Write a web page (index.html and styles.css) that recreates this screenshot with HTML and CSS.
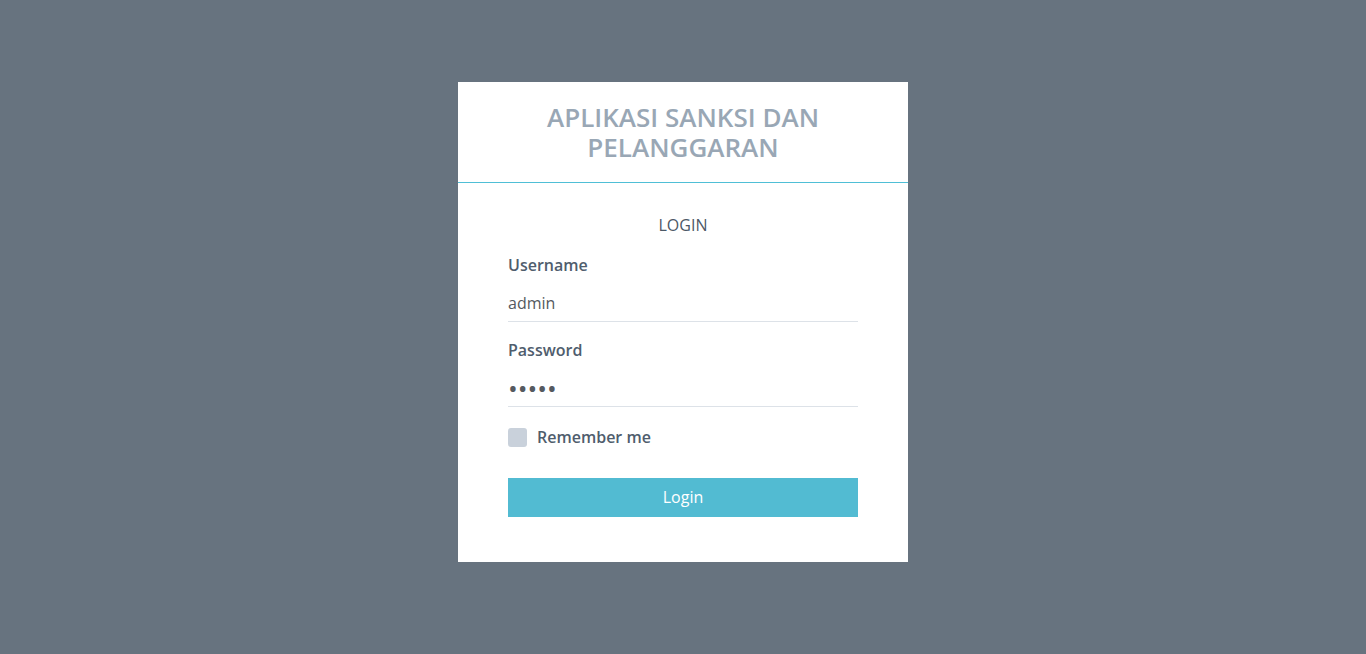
FILE: index.html
```html
<!DOCTYPE html>
<html lang="id">
<head>
<meta charset="utf-8">
<title>Login</title>
<link rel="stylesheet" href="styles.css">
</head>
<body>
<div class="page">
  <div class="card">
    <div class="card-header">
      <h1 class="title">APLIKASI SANKSI DAN PELANGGARAN</h1>
    </div>
    <form class="card-body">
      <p class="form-heading">LOGIN</p>
      <div class="field">
        <label class="field-label" for="username">Username</label>
        <input class="field-input" id="username" type="text" value="admin">
      </div>
      <div class="field">
        <label class="field-label" for="password">Password</label>
        <input class="field-input field-input-password" id="password" type="password" value="admin">
      </div>
      <label class="remember">
        <input class="remember-box" type="checkbox">
        <span class="remember-text">Remember me</span>
      </label>
      <button class="btn-login" type="button">Login</button>
    </form>
  </div>
</div>
</body>
</html>
```

FILE: styles.css
```css
* { box-sizing: border-box; }
html, body { margin: 0; padding: 0; }
body {
  background: #67737f;
  font-family: "Open Sans", "Liberation Sans", sans-serif;
  min-height: 654px;
}
.page {
  display: flex;
  justify-content: center;
  padding-top: 82px;
}
.card {
  width: 450px;
  background: #ffffff;
}
.card-header {
  padding: 20px 30px;
  border-bottom: 1px solid #4fbfd6;
}
.title {
  margin: 0;
  font-size: 26px;
  line-height: 30px;
  font-weight: 600;
  color: #99a7b5;
  text-align: center;
}
.card-body {
  display: flex;
  flex-direction: column;
  padding: 31px 50px 45px;
  margin: 0;
}
.form-heading {
  margin: 0 0 18px;
  font-size: 16px;
  line-height: 22px;
  color: #4c5866;
  text-align: center;
}
.field {
  display: flex;
  flex-direction: column;
  margin-bottom: 17px;
}
.field + .field { margin-bottom: 21px; }
.field-label {
  font-size: 16px;
  line-height: 22px;
  font-weight: 600;
  color: #4f5d6d;
  margin-bottom: 7px;
}
.field-input {
  height: 39px;
  border: 0;
  border-bottom: 1px solid #dde2e8;
  padding: 2px 0 0;
  font-family: inherit;
  font-size: 16px;
  color: #555a60;
  outline: none;
  background: transparent;
}
.field-input-password {
  font-size: 26px;
  padding: 2px 0 0;
}
.remember {
  display: flex;
  align-items: center;
  gap: 10px;
  height: 19px;
  margin-bottom: 31px;
}
.remember-box {
  appearance: none;
  -webkit-appearance: none;
  margin: 0;
  width: 19px;
  height: 19px;
  border-radius: 3px;
  background: #c9d1db;
}
.remember-text {
  font-size: 16px;
  line-height: 20px;
  font-weight: 600;
  color: #4f5d6d;
  padding-bottom: 1px;
}
.btn-login {
  height: 39px;
  border: 0;
  background: #52bbd2;
  color: #ffffff;
  font-family: inherit;
  font-size: 16px;
  padding: 0 0 2px;
  cursor: pointer;
}
```
